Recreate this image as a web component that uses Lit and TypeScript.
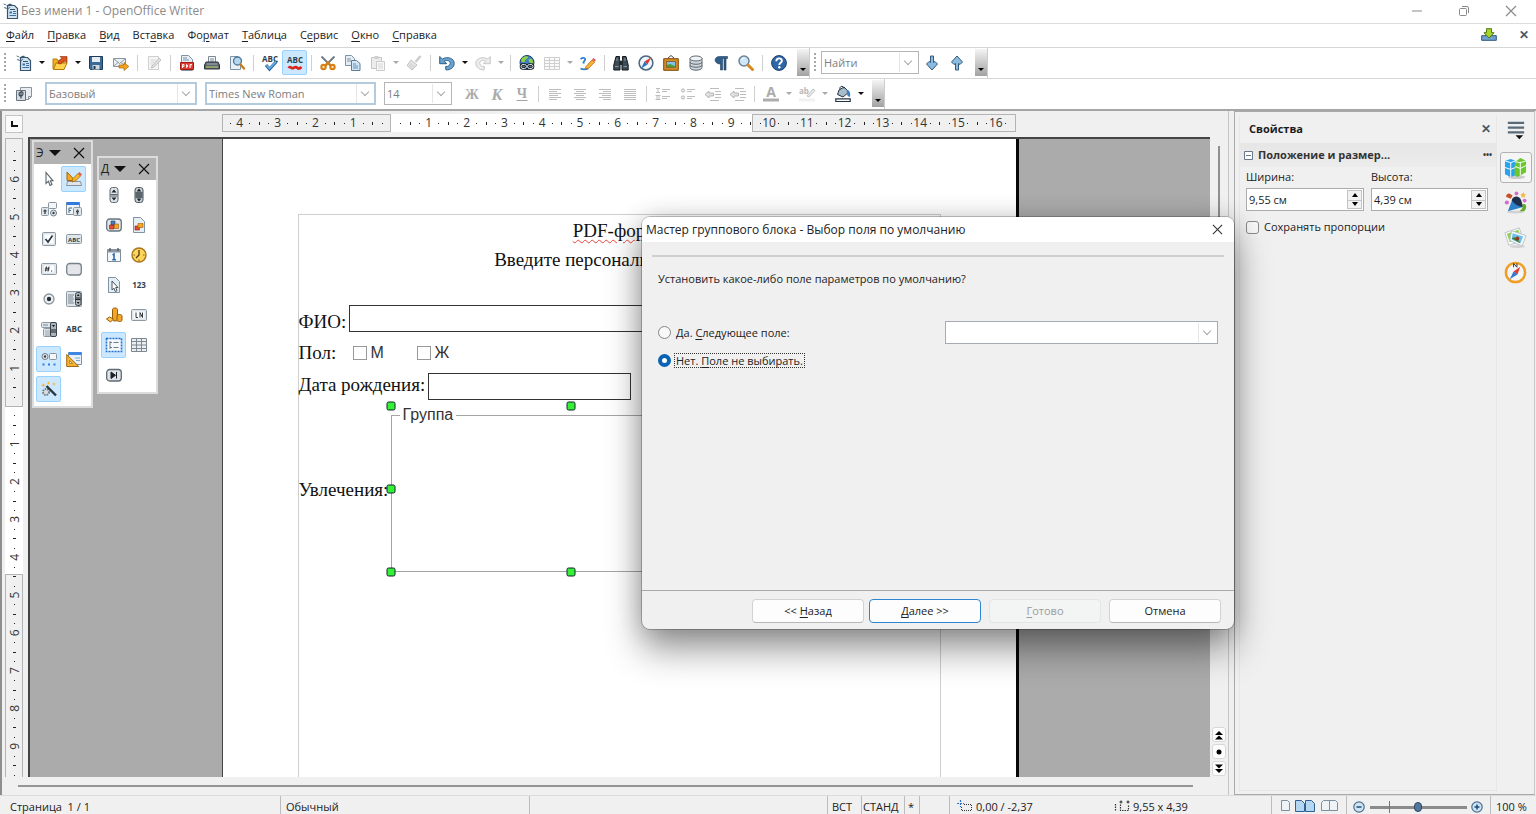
import { LitElement, html, svg, css, nothing } from "lit";
import { customElement, property, state } from "lit/decorators.js";
import { classMap } from "lit/directives/class-map.js";

/* ---------- icon artwork, each on a 16 x 16 grid ---------- */
const page = svg`<path d="M2.5.5h7l4 4v11h-11z" fill="#e4eef5" stroke="#7f93a3"/>`;
const frame = (x: number, y: number, w: number, h: number) =>
  svg`<rect x=${x} y=${y} width=${w} height=${h} rx="1" fill="#dfe5e9" stroke="#8c99a4"/>`;
const art: Record<string, unknown> = {
  app: svg`<path d="M4.500 2.500h7l3 3v10h-10z" fill="#d3e4f1" stroke="#39536a" stroke-width="1.200"/><path d="M7 6.500h5" stroke="#39536a"/><path d="M6.500 8.500h2.500v2H6.500z" fill="#3b6ea5"/><path d="M10 8.500h3M10 10.500h3M6.500 12.500h6.500" stroke="#3b6ea5"/><path d="M0 .800c2 0 3 .6 4 1.600C5.500.800 8 .200 10 1.300 8 1.500 7 2.300 6 3.600 4.500 2.300 2 2.300 0 .800z" fill="#37566e"/><path d="M.500 4.500c1.500-.6 3 .2 3.700 1.200C5 4.500 6.500 3.800 8 4.300 6.500 4.800 6 5.500 5.200 6.700 4 5.500 2 5.800.500 4.500z" fill="#56748c"/>`,
  open: svg`<path d="M1 14V4h4l1 2h6v8z" fill="#f2b21b" stroke="#b57a05"/><path d="M1.500 14.500 4 8h11l-3 6.500z" fill="#ffd34d" stroke="#b57a05"/><path d="M6 8.500c0-3 1.500-4 4-5L8 1.500h7V8l-2-2C10.500 6.500 9.500 7.500 9 9z" fill="#d9541e" stroke="#8e2f0b" stroke-width=".6"/>`,
  save: svg`<path d="M1.500 1.500h13v13h-12l-1-1z" fill="#3c6a94" stroke="#1d3b57"/><path d="M4 2h8v5H4z" fill="#e6eff6"/><path d="M4.500 10h7v4.500h-7z" fill="#cfd8df"/><path d="M5.500 11h2v3h-2z" fill="#1d3b57"/>`,
  mail: svg`<path d="M.500 3.500h12v8H.500z" fill="#edf1f4" stroke="#8a98a4"/><path d="m1 4 5.500 4.500L12 4M1 11l4-3.500M12 11 8 7.500" fill="none" stroke="#8a98a4"/><path d="M6 10h5V7.500l4.800 4L11 15.500V13H6z" fill="#f6a21c" stroke="#a86408" stroke-width=".7"/>`,
  edit: svg`<path d="M2.500 1.500h10v13h-10z" fill="#f6f6f6" stroke="#cfcfcf"/><path d="M4.500 5h5M4.500 7h4M4.500 9h2" stroke="#d4d4d4"/><path d="m6 11 7-8 2 2-7 7-3 1z" fill="#e0e0e0" stroke="#c2c2c2"/>`,
  pdf: svg`${page}<path d="M4 3h4M4 5h6" stroke="#7f93a3"/><path d="M1.500 7.500h13v7h-13z" fill="#e03a32" stroke="#a81812"/><path d="M3.500 13V9.500H5v2H3.500M7.500 9.500v3c1.500 0 1.500-3 0-3M11 13V9.500h2M11 11h1.500" stroke="#fff" fill="none" stroke-width=".9"/>`,
  print: svg`<path d="M4.500 1.500h7v6h-7z" fill="#f3f6f8" stroke="#7b8893"/><path d="M6 4h4M6 6h4" stroke="#7b8893"/><path d="M2 7h12l1.500 3v4H.500v-4z" fill="#59636d" stroke="#2d353c"/><path d="M2 12h12" stroke="#c8e06b"/><path d="M2.500 9h11" stroke="#aeb7bf"/>`,
  preview: svg`<path d="M1.500 1.500h7l3 3v10h-10z" fill="#e8f0f6" stroke="#7f93a3"/><circle cx="8.500" cy="6" r="4" fill="#a9d2f0" fill-opacity=".85" stroke="#4c7597" stroke-width="1.300"/><path d="m11.500 9.500 3.500 4" stroke="#c77b1f" stroke-width="2.400" stroke-linecap="round"/>`,
  spell: svg`<text x="8" y="6.500" class="tiny" text-anchor="middle">ABC</text><path d="m4 10 3.500 4 7-7.500" fill="none" stroke="#2f6da8" stroke-width="3.200"/><path d="m4.500 10.200 3 3.200 6.500-6.700" fill="none" stroke="#6fb4ea" stroke-width="1.400"/>`,
  autospell: svg`<text x="8" y="8" class="tiny" text-anchor="middle">ABC</text><path d="M1.500 13c2-3 3 1.500 5 0s3-1 4 0 2.500.500 4-1" fill="none" stroke="#d8261c" stroke-width="2.600"/>`,
  cut: svg`<path d="m1.500 1.500 9 9M14.500 1.500l-9 9" stroke="#707a83" stroke-width="1.800"/><circle cx="3.500" cy="12" r="2.200" fill="#fbe0b0" stroke="#d57e12" stroke-width="2"/><circle cx="12.500" cy="12" r="2.200" fill="#fbe0b0" stroke="#d57e12" stroke-width="2"/><path d="m5.500 10.500 2.500-3 2.500 3" stroke="#d57e12" stroke-width="2.200" fill="none"/>`,
  copy: svg`<path d="M.500.500h6l3 3v7h-9z" fill="#e4eef5" stroke="#7f93a3"/><path d="M2 4h4M2 6h4" stroke="#7f93a3"/><path d="M6.500 5.500h5l3.500 3v7H6.500z" fill="#d3e7f6" stroke="#5f7c93"/><path d="M8 9h3M8 11h5M8 13h5" stroke="#5f8fb5"/>`,
  paste: svg`<path d="M1.500 2.500h10v11h-10z" fill="#ececec" stroke="#c6c6c6"/><path d="M4.500 1h4v3h-4z" fill="#d0d0d0"/><path d="M6.500 6.500h8v9h-8z" fill="#f7f7f7" stroke="#cbcbcb"/><path d="M8 9h5M8 11h5M8 13h5" stroke="#d6d6d6"/>`,
  brush: svg`<path d="m14.500 1-5 6" stroke="#cdcdcd" stroke-width="2.600"/><path d="m5 5 6 5-5 5-5-4.500z" fill="#e4e4e4" stroke="#c4c4c4"/><path d="m4 8.500 5 4M3 10l4.500 4" stroke="#cfcfcf"/>`,
  undo: svg`<path d="M.700 1.500v7.200h7L5.200 6.200c3-1.400 6.200-.600 6 2.300-.200 2-2 3-4.700 3.200l.500 3.300c4.600-.200 8-2.300 8.200-6.500C15.400 3.300 8.500 1 3.300 4z" fill="#6ba3d0" stroke="#2f5f88"/>`,
  redo: svg`<path d="M15.300 1.500v7.200h-7l2.500-2.500c-3-1.400-6.200-.600-6 2.300.200 2 2 3 4.700 3.200L9 15C4.400 14.800 1 12.700.800 8.500.600 3.300 7.500 1 12.700 4z" fill="#ececec" stroke="#c8c8c8"/>`,
  globe: svg`<circle cx="8" cy="7.500" r="7" fill="#3f7fc0" stroke="#1f3f66"/><path d="M3 3c2-2 6-2 6-1 0 2-3 2-3 4S2 7 2 6zM10 4c3-1 4 1 4 3s-2 3-3 1-2-3-1-4z" fill="#8fcf4a"/><rect x="2" y="9.500" width="5.500" height="4" rx="2" fill="none" stroke="#1a1a1a" stroke-width="2.600"/><rect x="8.500" y="9.500" width="5.500" height="4" rx="2" fill="none" stroke="#1a1a1a" stroke-width="2.600"/><rect x="2" y="9.500" width="5.500" height="4" rx="2" fill="none" stroke="#dfe6ea"/><rect x="8.500" y="9.500" width="5.500" height="4" rx="2" fill="none" stroke="#dfe6ea"/>`,
  tableoff: svg`<path d="M.500 2.500h15v12H.500zM.500 5.500h15M.500 8.500h15M.500 11.500h15M5.500 2.500v12M10.500 2.500v12" fill="#fafafa" stroke="#cfcfcf"/>`,
  draw: svg`<path d="M.500 4c3-2 5.500-1 4.500 1s-3 3-.500 3M.500 13.500c2 1 5 1 8 0" fill="none" stroke="#2f7fcf" stroke-width="1.700"/><path d="m6 11.500 6-6.500 2.500 2.300-6 6-3.500.700z" fill="#f9b233" stroke="#b46a0c" stroke-width=".8"/><path d="m12 4.500 1.500-1.500 2.500 2.300-1.500 1.500z" fill="#e5564a"/>`,
  find: svg`<path d="M3 1.500h3.500v3L7 6v9H.800v-5zM13 1.500H9.500v3L9 6v9h6.200v-5z" fill="#3d4b57" stroke="#151b20"/><path d="M6 6h4v4H6z" fill="#222b32"/><path d="M2 11.500h3.500M10.500 11.500H14M4 3v3M12 3v3" stroke="#8797a4"/>`,
  compass: svg`<circle cx="8" cy="8" r="6.900" fill="#edf4fa" stroke="#4a6881" stroke-width="1.500"/><path d="M13 2.500 9.500 9.500 6.500 6.500z" fill="#e2352b"/><path d="M3 13.500 9.500 9.500l-3-3z" fill="#2f72b8"/>`,
  gallery: svg`<path d="m5 3 3-2.500L11 3" fill="none" stroke="#5b4632"/><path d="M.700 3.700h14.600v11.600H.700z" fill="#d58a26" stroke="#7d4a0d"/><path d="M3.500 6.500h9v6h-9z" fill="#7ec3ef" stroke="#7d4a0d" stroke-width=".7"/><path d="M4 12v-2l3-1 5 2v1.500z" fill="#4f9a35"/>`,
  db: svg`<path d="M2 3.500v9c0 3.600 12 3.600 12 0v-9" fill="#ced5da" stroke="#5f6a73"/><path d="M2 7c0 3 12 3 12 0M2 10c0 3 12 3 12 0" fill="none" stroke="#5f6a73"/><ellipse cx="8" cy="3.500" rx="6" ry="2.500" fill="#f1f4f6" stroke="#5f6a73"/>`,
  pilcrow: svg`<path d="M14.500 1.500v2h-1.500v11.500h-2V3.500H9.500V15h-2V9C.500 9 .500 1.500 6.500 1.500z" fill="#2f5d8c" stroke="#1c3a59" stroke-width=".6"/>`,
  zoom: svg`<circle cx="6" cy="6" r="5" fill="#cfe7f8" stroke="#66839b" stroke-width="1.500"/><path d="M3.500 5c.500-1.500 2-2 3-1.800" stroke="#fff" fill="none"/><path d="m10 10 4.500 4.500" stroke="#d58a26" stroke-width="3" stroke-linecap="round"/>`,
  help: svg`<circle cx="8" cy="8" r="7.400" fill="#2f66a8" stroke="#1b3f70"/><path d="M5.300 6.200c0-3.700 5.600-3.700 5.600-.500 0 2-2.600 2-2.600 4.200" fill="none" stroke="#fff" stroke-width="1.900"/><circle cx="8.300" cy="12.300" r="1.200" fill="#fff"/>`,
  down: svg`<path d="M6.500 1h3v6.500L11 6.500 13.500 9 8 15 2.500 9 5 6.500l1.500 1z" fill="#8abbe0" stroke="#34597a"/>`,
  up: svg`<path d="M6.500 15h3V8.500L11 9.500 13.500 7 8 1 2.500 7 5 9.500l1.500-1z" fill="#8abbe0" stroke="#34597a"/>`,
  styles: svg`<path d="M4.500 1.500h11v9l-3 3h-8z" fill="#e8edf1" stroke="#8a949d"/><path d="M12.500 13.500v-3h3" fill="none" stroke="#8a949d"/><path d="M.500 4.500h9v10h-9z" fill="#d7dde2" stroke="#66727c"/><path d="M5 6.500v6M3 7.500c0 3.500 4 3.500 4 0s-4-1-4 0" stroke="#3f4a54" fill="none" stroke-width="1.200"/>`,
  bold: svg`<text x="8" y="13" class="glyph" text-anchor="middle">Ж</text>`,
  italic: svg`<text x="8" y="13.500" class="glyph ital" text-anchor="middle">К</text>`,
  under: svg`<text x="8" y="12" class="glyph" text-anchor="middle">Ч</text><path d="M2.500 14.500h11" stroke="#a4a4a4"/>`,
  left: svg`<path d="M2 3.500h12M2 5.500h8M2 7.500h12M2 9.500h9M2 11.500h12M2 13.500h8" stroke="#bdbdbd"/>`,
  center: svg`<path d="M2 3.500h12M4 5.500h8M2 7.500h12M4 9.500h8M2 11.500h12M4 13.500h8" stroke="#bdbdbd"/>`,
  right: svg`<path d="M2 3.500h12M6 5.500h8M2 7.500h12M5 9.500h9M2 11.500h12M6 13.500h8" stroke="#bdbdbd"/>`,
  justify: svg`<path d="M2 3.500h12M2 5.500h12M2 7.500h12M2 9.500h12M2 11.500h12M2 13.500h12" stroke="#bdbdbd"/>`,
  numbered: svg`<path d="M1 2.500h4M1 6.500h4M3 2.500v4M.500 9.500h5M.500 13.500h5M2 9.500v4M4 9.500v4M7 3.500h8M7 5.500h5M7 10.500h8M7 12.500h5" stroke="#bdbdbd"/>`,
  bullets: svg`<circle cx="3" cy="4.500" r="1.600" fill="#eee" stroke="#b5b5b5"/><circle cx="3" cy="11.500" r="1.600" fill="#eee" stroke="#b5b5b5"/><path d="M7 3.500h8M7 5.500h5M7 10.500h8M7 12.500h5" stroke="#bdbdbd"/>`,
  outdent: svg`<path d="M5 2.500h9M10 5.500h6M10 8.500h6M10 11.500h6M5 14.500h9" stroke="#bdbdbd"/><path d="M0 8.500 4 5v2h4.500v3H4v2z" fill="#e2e2e2" stroke="#b5b5b5"/>`,
  fontcolor: svg`<text x="8" y="11" class="glyph sans" text-anchor="middle">A</text><path d="M0 14h16" stroke="#adadad" stroke-width="3"/>`,
  marker: svg`<text x="0" y="8" class="tiny pale">ab</text><path d="m8 10 6-7 2 1.500L10 11z" fill="#e8e8e8" stroke="#c4c4c4"/><path d="M0 14h16" stroke="#f1f1f1" stroke-width="3"/>`,
  fill: svg`<path d="m4 4 5-3 5 5-6 5L2.500 8.500z" fill="#a9bccb" stroke="#253545"/><path d="M5 3.500c-1-4 4-4 4-1" fill="none" stroke="#253545"/><path d="M11.500 3.500c3.500 1 4 3.500 3.500 7.500l-2.500-1z" fill="#3c7fc0"/><path d="M.800 12.800h14.400v2.700H.800z" fill="#fff" stroke="#253545" stroke-width="1.200"/>`,
  pointer: svg`<path d="M5 1.500v11l2.500-2.300L9 14.500l2-1-1.600-3.700H12z" fill="#fff" stroke="#5a646c" stroke-width="1.100"/>`,
  design: svg`<path d="M1 9.500V1l8 8.500z" fill="#f5a91f" stroke="#a86608"/><path d="M1.500 10.500h13l1 4H.500z" fill="#dfe5ea" stroke="#8794a0"/><path d="m6 11 1-3.500 5-5L14.500 5l-5 5z" fill="#fbb42e" stroke="#9e6a12" stroke-width=".8"/><path d="m12 2.500 1.500-1.500L16 3.500 14.500 5z" fill="#e4584c"/>`,
  control: svg`<rect x="7.500" y="1.500" width="8" height="6" rx="1" fill="#f4f6f8" stroke="#87939d"/>${frame(0.5, 6.5, 7, 8)}<path d="M4 8.500v4.500M2.500 10h3" stroke="#3e4a54" stroke-width="1.400"/><circle cx="12.500" cy="12" r="3" fill="#e3e9ed" stroke="#6f7c87"/><circle cx="12.500" cy="12" r="1.200" fill="#30404f"/>`,
  form: svg`<path d="M.500 1.500h13v12H.500z" fill="#eef3f7" stroke="#8794a0"/><path d="M.500 1h13v3H.500z" fill="#2f7be0"/><path d="M3 7h3M3 7v5M3 9.500h2" stroke="#4b6a85"/>${frame(7.5, 6.5, 8, 8)}<path d="M11.500 8.500v5M10 10.500h3" stroke="#3e4a54" stroke-width="1.400"/>`,
  check: svg`${frame(1.5, 1.5, 13, 13)}<path d="M3.500 3.500h9v9h-9z" fill="#fff"/><path d="m4.500 8 2.500 3 4.500-6.500" fill="none" stroke="#2c3640" stroke-width="1.700"/>`,
  textbox: svg`${frame(0.5, 3.5, 15, 9)}<text x="8" y="10.500" class="micro" text-anchor="middle">ABC</text>`,
  formatted: svg`${frame(0.5, 2.5, 15, 11)}<path d="M3 4.500h10v7H3z" fill="#fff"/><path d="M5.500 5.500l-1 5M8 5.500l-1 5M4 7.200h4.500M3.700 9h4.500M10 10h1.200" stroke="#2c3640"/>`,
  pushbutton: svg`<rect x=".700" y="2.500" width="14.600" height="11.500" rx="3" fill="#e3e5ea" stroke="#75828c" stroke-width="1.300"/>`,
  radio: svg`<circle cx="8" cy="8" r="5" fill="#eef1f4" stroke="#8a959e" stroke-width="1.300"/><circle cx="8" cy="8" r="2.200" fill="#26323c"/>`,
  listbox: svg`${frame(0.5, 0.5, 15, 15)}<path d="M2 4h6M2 6h5M2 8h6M2 10h5M2 12h6" stroke="#7b8791"/><rect x="9.500" y="1.500" width="5.500" height="13" rx="2" fill="#aab4bd" stroke="#3a444d"/><path d="m12.200 3 1.300 2h-2.600zM12.200 13l-1.300-2h2.600z" fill="#111"/><path d="M10 7h4.500M10 8.500h4.500" stroke="#222"/>`,
  combo: svg`${frame(0.5, 1.5, 15, 5)}<path d="M2 4h5" stroke="#7b8791"/>${frame(2.5, 7.5, 8, 8)}<path d="M4 10h5M4 12h5M4 14h5" stroke="#9aa5ae"/><rect x="9.500" y="1.500" width="6" height="14" rx="1.500" fill="#aab4bd" stroke="#3a444d"/><path d="m12.500 6-1.500-2h3z" fill="#111"/><path d="M10 9h5M10 11h5" stroke="#222"/>`,
  label: svg`<text x="8" y="11" class="tiny" text-anchor="middle">ABC</text>`,
  more: svg`<circle cx="4" cy="5.500" r="3" fill="#e3e9ed" stroke="#6f7c87"/><circle cx="4" cy="5.500" r="1.200" fill="#30404f"/><rect x="8.500" y="2.500" width="7" height="6" rx="1" fill="#f4f6f8" stroke="#87939d"/><path d="M1.500 13.500h2M7 13.500h2M12.500 13.500h2" stroke="#2f7be0" stroke-width="2"/>`,
  formdesign: svg`<path d="M2.500 1.500h13v12h-13z" fill="#e9f1f8" stroke="#8794a0"/><path d="M2.500 1h13v3h-13z" fill="#3d86e4"/><path d="M9 7h5M10 9.500h4" stroke="#7fa7cd"/><path d="M.700 3.500v12h12z" fill="#f9b233" stroke="#9e6a12"/><path d="M3.500 9.500v3h3z" fill="#fff3d0" stroke="#9e6a12" stroke-width=".7"/>`,
  wizard: svg`<circle cx="5" cy="11" r="3" fill="#dce0e3" stroke="#6f7a83" stroke-width="2" stroke-dasharray="1.500 1"/><path d="m5.500 5 9.500 9.500" stroke="#2d353c" stroke-width="2.400"/><path d="m2 2 1 1.500L4.500 4 3 4.800 2.500 6.500 1.700 5 0 4.500l1.500-.800zM7.500 0l.6 1.500L9.500 2l-1.400.6L7.500 4 7 2.600 5.500 2 7 1.500zM13 1l.6 1.500 1.400.500-1.400.6L13 5l-.6-1.400L11 3l1.400-.5z" fill="#f7b52b"/>`,
  spin: svg`<rect x="4" y=".500" width="8" height="15" rx="2.500" fill="#dfe4e8" stroke="#5b6670"/><path d="m8 2.500 2.500 3h-5zM8 13.500l-2.500-3h5z" fill="#1b2127"/><path d="M4.500 7.500h7M4.500 9h7" stroke="#5b6670"/>`,
  scroll: svg`<rect x="4" y=".500" width="8" height="15" rx="2.500" fill="#c6cdd3" stroke="#4b555e"/><path d="m8 1.500 2.300 3H5.700zM8 14.500l-2.300-3h4.600z" fill="#1b2127"/><path d="M4.500 6h7M4.500 8h7M4.500 10h7" stroke="#39434c" stroke-width="1.400"/>`,
  imgbutton: svg`<rect x=".700" y="2" width="14.600" height="12" rx="3" fill="#e3e8ec" stroke="#68757f" stroke-width="1.300"/><path d="M5 4h4v4H5z" fill="#4a78b8" stroke="#26466f" stroke-width=".6"/><path d="M3.500 8h4.500v4H3.500z" fill="#e34b33" stroke="#8e1f10" stroke-width=".6"/><path d="M8.500 7h4v4.500h-4z" fill="#f9a825" stroke="#9b5b08" stroke-width=".6"/>`,
  imgcontrol: svg`${page}<path d="M4 9h4.500v4H4z" fill="#e34b33" stroke="#8e1f10" stroke-width=".6"/><path d="M7 6.500h5v4H7z" fill="#f9a825" stroke="#9b5b08" stroke-width=".6"/>`,
  date: svg`<path d="M1.500 2.500h13v12h-13z" fill="#f5f8fa" stroke="#808c96"/><path d="M1.500 2.500h13v3h-13z" fill="#8b98a3"/><path d="M4 1v3M12 1v3" stroke="#4c565f" stroke-width="1.300"/><path d="M6.500 8 8 7v5.500M6.300 12.800h3.600" stroke="#2461a8" stroke-width="1.500" fill="none"/>`,
  time: svg`<circle cx="8" cy="8" r="7" fill="#ffd45c" stroke="#a8741b" stroke-width="1.400"/><path d="M8 3v5l-3 3" fill="none" stroke="#4d3a14" stroke-width="1.300"/><path d="M12 8h1.500M8 12.500V14M2.500 8H4" stroke="#7d5a14"/>`,
  file: svg`${page}<path d="M6 4v9l2-1.800 1.300 3.300 1.700-.8L9.700 10.500H12z" fill="#fff" stroke="#4b555e"/>`,
  numeric: svg`<text x="8" y="11" class="tiny" text-anchor="middle">123</text>`,
  currency: svg`<path d="M6.500 2.500c0-2 5-2 5 0v10c0 2-5 2-5 0z" fill="#f3a72a" stroke="#95590a"/><path d="M11 9c0-2 5-2 5 0v4c0 2-5 2-5 0z" fill="#f3a72a" stroke="#95590a"/><path d="m.500 12 3-2 4 2-3 3z" fill="#ffc85e" stroke="#95590a"/>`,
  pattern: svg`${frame(0.5, 2.5, 15, 11)}<path d="M2.500 4.500h11v7h-11z" fill="#fff"/><path d="M5 5.500v5h2M9 10.500v-5l2.500 5v-5" fill="none" stroke="#2c3640"/>`,
  group: svg`<path d="M.500 1.500h15v13H.500z" fill="#f6f9fb" stroke="#1e6fd0" stroke-width="1.600" stroke-dasharray="2 1"/><path d="M4 4v8M4 5.500h2M4 10.500h2M7.500 5.500h5M7.500 10.500h5" stroke="#6c7a86"/>`,
  tablectl: svg`<path d="M.500 1.500h15v13H.500z" fill="#eceff1" stroke="#7d8892"/><path d="M.500 4.500h15M.500 8h15M.500 11.500h15M5.500 1.500v13M10.500 1.500v13" stroke="#7d8892"/>`,
  navbar: svg`<rect x=".700" y="2.500" width="14.600" height="11.500" rx="3" fill="#dfe3e7" stroke="#5f6b75" stroke-width="1.300"/><path d="M5 5v6.500l4.500-3.200zM10.500 5v6.500" fill="#1b2127" stroke="#1b2127"/>`,
  update: svg`<path d="M.700 8.700h14.600v4.600H.700z" fill="#6ea3cf" stroke="#2e577b"/><path d="M5.500 1.700h5v4h2.500L8 11 3 5.700h2.500z" fill="#a8d62c" stroke="#4f7a0c"/>`,
  minus: svg`<circle cx="8" cy="8" r="5.200" fill="#cfe3f3" stroke="#4a6f90" stroke-width="1.200"/><path d="M5.500 8h5" stroke="#1f4b75" stroke-width="1.500"/>`,
  plus: svg`<circle cx="8" cy="8" r="5.200" fill="#cfe3f3" stroke="#4a6f90" stroke-width="1.200"/><path d="M5.500 8h5M8 5.500v5" stroke="#1f4b75" stroke-width="1.500"/>`,
  pos: svg`<path d="M0 4.500h7M3.500 1v7" stroke="#2f6fd0" stroke-width="1.200" stroke-dasharray="2 1"/><path d="M7 5.500h7.500v6H4.500V8" fill="none" stroke="#333" stroke-dasharray="1 1"/>`,
  size: svg`<path d="M1.500 5v7M6.500 5.500v6h8v-6" fill="none" stroke="#333" stroke-width="1.200" stroke-dasharray="1.500 1"/><path d="M5.500 3h3M7 1.500v3M15.500 3h-3M14 1.500v3" stroke="#222"/>`,
};

@customElement("oo-icon")
export class OoIcon extends LitElement {
  static styles = css`
    :host { display: inline-flex; width: 16px; height: 16px; flex: none; }
    svg { width: 16px; height: 16px; display: block; overflow: visible; }
    .tiny { font: 700 8px "Open Sans", sans-serif; fill: #2e3f4e; }
    .pale { fill: #b8b8b8; }
    .micro { font: 700 6px "Open Sans", sans-serif; fill: #2e3f4e; }
    .glyph { font: 700 14px "Liberation Serif", serif; fill: #ababab; }
    .sans { font-family: "Open Sans", sans-serif; }
    .ital { font-style: italic; font-size: 16px; }
  `;
  @property() name = "app";
  render() {
    return html`<svg viewBox="0 0 16 16" fill="none" aria-hidden="true">${art[this.name] ?? nothing}</svg>`;
  }
}

/* ---------- rulers ---------- */
const CM = 37.8;
type Band = { from: number; to: number; shaded: boolean };

@customElement("oo-ruler")
export class OoRuler extends LitElement {
  static styles = css`
    :host { display: block; }
    svg { display: block; }
    .band { fill: #fff; }
    .shaded { fill: #f0f0f0; stroke: #b4b4b4; }
    .num { font: 12px "Open Sans", sans-serif; fill: #333; text-anchor: middle; }
    .tick { stroke: #222; stroke-width: 1; }
  `;
  @property({ type: Boolean }) vertical = false;
  @property({ attribute: false }) bands: Band[] = [];
  @property({ type: Number }) zero = 0;
  @property({ type: Number }) length = 0;

  render() {
    const v = this.vertical;
    const marks = [];
    const first = Math.ceil((-this.zero / CM) * 4);
    const last = Math.floor(((this.length - this.zero) / CM) * 4);
    for (let q = first; q <= last; q++) {
      const at = this.zero + (q * CM) / 4;
      if (at < 5 || at > this.length - 3 || q === 0) continue;
      if (q % 4 === 0) {
        const label = String(Math.abs(q / 4));
        marks.push(v
          ? svg`<text class="num" transform="translate(14 ${at}) rotate(-90)">${label}</text>`
          : svg`<text class="num" x=${at} y="13">${label}</text>`);
      } else {
        const r = q % 2 === 0 ? 1.5 : 0.5;
        marks.push(v
          ? svg`<path class="tick" d="M${9.5 - r} ${Math.round(at) + 0.5}h${2 * r}"/>`
          : svg`<path class="tick" d="M${Math.round(at) + 0.5} ${9.5 - r}v${2 * r}"/>`);
      }
    }
    const w = v ? 18 : this.length;
    const h = v ? this.length : 18;
    return html`<svg width=${w} height=${h}>
      ${this.bands.map((b) => {
        const cls = b.shaded ? "band shaded" : "band";
        const size = b.to - b.from - (b.shaded ? 1 : 0);
        const o = b.shaded ? 0.5 : 0;
        const t = b.shaded ? 17 : 18;
        return v
          ? svg`<rect class=${cls} x=${o} y=${b.from + o} width=${t} height=${size}/>`
          : svg`<rect class=${cls} x=${b.from + o} y=${o} width=${size} height=${t}/>`;
      })}
      ${marks}
    </svg>`;
  }
}

/* ---------- data ---------- */
type Tool = string; // "|" separator, "V" drop arrow, "v" greyed drop arrow, "*" pressed
const standard: Tool[] = ["app", "V", "open", "V", "save", "mail", "|", "edit", "|", "pdf", "print", "preview", "|",
  "spell", "*autospell", "|", "cut", "copy", "paste", "v", "brush", "|", "undo", "V", "redo", "v", "|", "globe",
  "tableoff", "v", "draw", "|", "find", "compass", "gallery", "db", "pilcrow", "zoom", "|", "help"];
const formatting: Tool[] = ["bold", "italic", "under", "|", "left", "center", "right", "justify", "|", "numbered",
  "bullets", "outdent", "outdent", "|", "fontcolor", "v", "marker", "v", "fill", "V"];
const controls: Tool[] = ["pointer", "*design", "control", "form", "check", "textbox", "formatted", "pushbutton",
  "radio", "listbox", "combo", "label", "*more", "formdesign", "*wizard"];
const extras: Tool[] = ["spin", "scroll", "imgbutton", "imgcontrol", "date", "time", "file", "numeric", "currency",
  "pattern", "*group", "tablectl", "navbar"];
const menus: [string, string, string][] = [["", "Ф", "айл"], ["", "П", "равка"], ["", "В", "ид"], ["Вст", "а", "вка"],
  ["Фо", "р", "мат"], ["", "Т", "аблица"], ["С", "е", "рвис"], ["", "О", "кно"], ["", "С", "правка"]];

@customElement("app-root")
export class AppRoot extends LitElement {
  static styles = css`
    :host {
      display: flex; flex-direction: column; height: 100vh; overflow: hidden; position: relative;
      font: 11px/16px "Open Sans", "Noto Sans", sans-serif; color: #1c1c1c; background: #fff;
    }
    * { box-sizing: border-box; }
    button { font: inherit; color: inherit; border: 0; background: none; padding: 0; margin: 0; }
    input, select { font: inherit; color: inherit; margin: 0; border-radius: 0; }
    u { text-underline-offset: 2px; }

    .titlebar { display: flex; align-items: center; height: 24px; flex: none; padding: 0 2px 1px 3px; gap: 2px;
      border-bottom: 1px solid #dcdcdc; color: #8a8a8a; }
    .titlebar h1 { font: inherit; font-size: 12px; margin: 0; flex: 1; }
    .win { display: flex; }
    .win button { width: 47px; height: 22px; display: grid; place-items: center; }
    .win svg { width: 12px; height: 12px; }

    .menubar { display: flex; align-items: center; height: 24px; flex: none; padding: 0 6px 2px; gap: 13px;
      border-bottom: 1px solid #d6d6d6; }
    .menubar a { color: inherit; text-decoration: none; }
    .menubar .end { margin-left: auto; display: flex; gap: 21px; align-items: center; }
    .closex { font-weight: 700; font-size: 12px; color: #4a5866; width: 12px; display: grid; place-items: center; }

    .bars { display: flex; flex-direction: column; flex: none; border-bottom: 2px solid #a6a6a6; }
    .bar { display: flex; align-items: center; align-self: flex-start; height: 30px; padding: 0 0 1px 4px;
      border-right: 1px solid #cdcdcd; }
    .row { display: flex; border-bottom: 1px solid #d6d6d6; }
    .row.last { border-bottom: 0; height: 30px; }
    .grip { width: 2px; height: 20px; margin-right: 5px; flex: none;
      background: repeating-linear-gradient(#a8a8a8 0 2px, transparent 2px 4px); }
    .tool { width: 25px; height: 25px; display: grid; place-items: center; flex: none; }
    .tool.on { background: #cce8ff; border: 1px solid #99d1ff; border-radius: 2px; }
    .sep { width: 8px; height: 16px; flex: none; background: linear-gradient(#cfcfcf, #cfcfcf) 4px 0 / 1px 100% no-repeat; }
    .drop { width: 11px; height: 25px; display: grid; place-items: center; flex: none; }
    .drop::after { content: ""; border: 3px solid transparent; border-top: 3px solid #111; border-bottom: 0; }
    .drop.off::after { border-top-color: #aaa; }
    .over { width: 12px; height: 27px; margin-left: 6px; flex: none; display: grid; place-items: end center;
      padding-bottom: 5px; background: linear-gradient(#f4f4f4, #a2a2a2); }
    .over::after { content: ""; border: 3px solid transparent; border-top: 3px solid #000; border-bottom: 0; }

    .combo { display: block; position: relative; height: 23px; }
    .combo select, .combo input { appearance: none; width: 100%; height: 100%; border: 1px solid #b5b5b5; background: #fff;
      padding: 0 2px; color: #7d7d7d; outline: 0; opacity: 1; }
    .combo input::placeholder { color: #7d7d7d; }
    .combo.blue select { border: 2px solid #b4cbde; }
    .combo::after { content: ""; position: absolute; right: 8px; top: 7px; width: 5px; height: 5px;
      border: solid #a8a8a8; border-width: 0 1px 1px 0; transform: rotate(45deg); pointer-events: none; }
    .combo::before { content: ""; position: absolute; right: 2px; top: 2px; bottom: 2px; width: 17px;
      border-left: 1px solid #e6e6e6; pointer-events: none; }
    .w-style { width: 152px; margin: 0 8px 0 9px; }
    .w-font { width: 171px; margin-right: 8px; }
    .w-size { width: 68px; margin-right: 7px; }
    .w-find { width: 98px; }

    .main { display: flex; flex: 1; min-height: 0; background: #f0f0f0; border-left: 2px solid #8e8e8e; }
    .editor { flex: 1; min-width: 0; display: grid; grid-template-columns: 26px 1fr 18px; grid-template-rows: 26px 1fr 18px;
      border-right: 1px solid #c6c6c6; }
    .corner { margin: 4px 0 0 3px; width: 18px; height: 18px; border: 1px solid #c4c4c4; background: #fafafa; display: grid; place-items: center; }
    .corner i { width: 7px; height: 6px; border: solid #111; border-width: 0 0 2px 2px; }
    .hruler { display: flex; justify-content: center; padding: 3px 0 0 1px; grid-column: 2; overflow: hidden; }
    .vruler { padding: 1px 0 0 3px; overflow: hidden; }
    .canvas { background: #ababab; border: solid #444; border-width: 2px 0 0 2px; position: relative; overflow: hidden;
      display: flex; justify-content: center; }
    .vscroll { display: flex; flex-direction: column; align-items: center; gap: 2px; padding: 9px 0 1px; grid-column: 3; }
    .vscroll .thumb { width: 2px; height: 200px; background: #8f8f8f; margin-bottom: auto; }
    .vscroll button { width: 14px; height: 15px; border: 1px solid #d8d8d8; border-radius: 3px; background: #fdfdfd;
      display: grid; place-items: center; }
    .vscroll svg { width: 10px; height: 10px; display: block; }
    .hscroll { grid-column: 1 / -1; padding: 8px 35px 0 16px; }
    .hscroll div { height: 2px; background: #959595; }

    .sheet { width: 797px; background: #fff; border: solid #444; border-width: 0 3px 0 1px; border-right-color: #080808;
      padding: 75px 75px 0; flex: none; font: 19px/29px "Liberation Serif", serif; color: #111; display: flex; }
    .body { flex: 1; border: 1px solid #cfcfcf; border-bottom: 0; padding-top: 1px; }
    .body p { margin: 0; text-align: center; }
    .wavy { text-decoration: underline wavy #e8443c 1px; text-underline-offset: 2px; }
    .line { display: flex; align-items: center; height: 31px; }
    .field { border: 1px solid #333; background: #fff; height: 27px; padding: 0 4px; }
    .fio { margin: 32px 0 0; }
    .fio .field { flex: 1; margin: -6px 1px 0 3px; }
    .born .field { width: 203px; margin: 5px 0 0 3px; }
    .born { height: 32px; }
    .sex { width: 54px; }
    .opt { display: flex; align-items: center; gap: 4px; font: 16px/20px "Liberation Sans", sans-serif; color: #333; width: 64px; }
    .opt input { appearance: none; width: 14px; height: 14px; border: 1px solid #999; background: #fff; }
    .hobby { display: flex; align-items: center; margin-top: 6px; }
    .hobby > span { width: 92px; }
    .grp { position: relative; width: 361px; height: 166px; }
    .grp fieldset { position: relative; border: 1px solid #a4a4a4; margin: 0; padding: 0 0 0 8px; height: 100%; min-width: 0; }
    .grp legend { font: 16px/18px "Liberation Sans", sans-serif; color: #333; padding: 0 3px; }
    .knob { position: absolute; width: 9px; height: 9px; border: 1px solid #123; border-radius: 2px; background: #35f035;
      transform: translate(-50%, -50%); }

    .palette { position: absolute; width: 61px; background: #fff; border: 2px solid #dcdcdc; z-index: 1; }
    .p1 { left: 2px; top: 1px; height: 268px; }
    .p2 { left: 67px; top: 17px; height: 238px; }
    .palette header { display: flex; align-items: center; height: 22px; background: #b2b2b2; padding: 0 6px 0 2px;
      font-size: 12px; color: #222; }
    .palette header svg { width: 12px; height: 12px; margin-left: auto; }
    .palette header button { display: flex; flex: 1; }
    .palette header .tri { width: 12px; flex: none; margin-left: 5px; }
    .palette header .tri svg { margin: 0; }
    .grid { display: grid; grid-template-columns: 25px 25px; grid-auto-rows: 26px; row-gap: 4px; padding: 2px 0 0 2px; }
    .grid .tool { height: 26px; }

    .sidebar { width: 301px; flex: none; display: flex; border: 1px solid #a9a9a9; border-right-color: #c8c8c8; margin: 0 1px 0 5px; }
    .deck { flex: 1; margin: 4px 0 3px 4px; border: 1px solid #e6e6e6; border-top: 0; }
    .deck h2 { font-size: 11px; line-height: 25px; margin: 0; padding: 0 4px 0 9px; display: flex; justify-content: space-between; }
    .deck h3 { font-size: 11px; line-height: 24px; margin: 2px 0 2px; padding: 0 4px 0 4px; display: flex; align-items: center; gap: 5px;
      background: linear-gradient(#e6e6e6, #ececec); color: #333; }
    .deck h3 span { flex: 1; }
    .deck h3 button { font-size: 8px; }
    .deck h3 svg { width: 9px; height: 9px; }
    .dims { display: grid; grid-template-columns: 118px 117px; gap: 7px; padding: 0 6px; }
    .dims label { display: block; }
    .spinbox { position: relative; display: block; height: 23px; margin-top: 3px; }
    .spinbox input { width: 100%; height: 100%; border: 1px solid #acacac; background: #fff; padding: 0 2px; outline: 0; }
    .spinbox .arrows { position: absolute; right: 2px; top: 2px; bottom: 2px; width: 15px; display: grid; grid-template-rows: 1fr 1fr;
      border: 1px solid #c4c4c4; background: #f2f2f2; }
    .arrows button { display: grid; place-items: center; }
    .arrows button + button { border-top: 1px solid #c4c4c4; }
    .arrows svg { width: 6px; height: 4px; display: block; }
    .keep { display: flex; align-items: center; gap: 5px; padding: 8px 6px; }
    .keep input { appearance: none; width: 13px; height: 13px; border: 1px solid #8a8a8a; border-radius: 3px; background: #f6f6f6; }
    .tabs { width: 37px; display: flex; flex-direction: column; align-items: center; padding-top: 6px; gap: 4px; }
    .tabs button { width: 32px; height: 31px; display: grid; place-items: center; }
    .tabs .cur { border: 1px solid #b2b2b2; border-radius: 3px; background: #f5f5f5; margin-top: 6px; }
    .tabs svg { width: 23px; height: 23px; display: block; }
    .tabs .burger { height: 24px; }

    .status { display: flex; height: 19px; flex: none; background: #f0f0f0; border-top: 1px solid #dcdcdc; color: #222; }
    .cell { border-right: 1px solid #bcbcbc; padding: 3px 0 0 5px; height: 19px; white-space: pre; display: flex; overflow: hidden; }
    .cell oo-icon { margin: 0 3px 0 0; }
    .c-page { width: 281px; padding-left: 10px; }
    .c-style { width: 249px; }
    .c-lang { flex: 1; }
    .c-ins { width: 34px; padding-left: 4px; }
    .c-std { width: 43px; padding-left: 1px; }
    .c-mod { width: 15px; padding-left: 3px; }
    .c-sig { width: 30px; }
    .c-pos { width: 322px; padding-left: 7px; }
    .c-pos span { width: 138px; }
    .c-view { width: 75px; padding-left: 6px; }
    .c-view svg { width: 62px; height: 14px; }
    .c-zoom { width: 144px; padding-left: 4px; align-items: flex-start; }
    .c-zoom input { appearance: none; width: 97px; height: 16px; margin: 0 2px 0 0;
      background: linear-gradient(#777, #777) 19px 50% / 1px 12px no-repeat, linear-gradient(#8b8b8b, #8b8b8b) 0 50% / 100% 3px no-repeat; }
    .c-zoom input::-webkit-slider-thumb { appearance: none; width: 8px; height: 10px; border-radius: 4px; background: #52779b; border: 1px solid #2d4a66; }
    .c-pct { width: 45px; border: 0; }

    .dialog { position: absolute; left: 642px; top: 217px; width: 592px; height: 412px;
      border-radius: 8px; background: #f0f0f0; z-index: 5; color: #222; display: flex; flex-direction: column;
      box-shadow: 0 0 0 1px rgba(0,0,0,.22), 0 20px 36px rgba(0,0,0,.42), 0 0 24px rgba(0,0,0,.16); }
    .dialog header { display: flex; align-items: center; justify-content: space-between; height: 25px; padding: 0 10px 0 4px;
      background: #fff; border-radius: 8px 8px 0 0; }
    .dialog header span { font-size: 12px; }
    .dialog header svg { width: 11px; height: 11px; display: block; }
    .dialog header button { padding: 1px; }
    .content { flex: 1; margin: 13px 10px 0; border-top: 2px solid #cfcfcf; padding: 14px 6px 0; }
    .content p { margin: 0 0 31px; }
    .choice { display: flex; align-items: center; height: 28px; }
    .choice label { padding: 0 1px; line-height: 13px; border: 1px solid transparent; margin-left: 3px; }
    .choice input:checked + label { border: 1px dotted #333; }
    .choice input { appearance: none; width: 13px; height: 13px; border: 1px solid #858585; border-radius: 50%; background: #f8f8f8; }
    .choice input:checked { border: 4px solid #0a63b4; background: #fff; }
    .choice .combo { width: 273px; margin-left: auto; }
    .choice .combo select { border: 1px solid #a6abb1; }
    .actions { display: flex; gap: 8px; justify-content: flex-end; border-top: 1px solid #a9a9a9; padding: 8px 13px 6px; }
    .actions div { display: flex; gap: 5px; }
    .actions button { width: 112px; height: 24px; border: 1px solid #d2d2d2; border-bottom-color: #b9b9b9; border-radius: 4px; background: #fdfdfd; }
    .actions button.primary { border: 1px solid #2f86d0; }
    .actions button:disabled { color: #9b9b9b; border-color: #e4e4e4; background: #f3f4f4; }
  `;

  @state() private choice = "no";

  private tool(t: Tool) {
    if (t === "|") return html`<span class="sep"></span>`;
    if (t === "v" || t === "V") return html`<button class=${classMap({ drop: true, off: t === "v" })} aria-label="▾"></button>`;
    const on = t.startsWith("*");
    const name = on ? t.slice(1) : t;
    return html`<button class=${classMap({ tool: true, on })} aria-label=${name}><oo-icon name=${name}></oo-icon></button>`;
  }

  private cross(color = "#333") {
    return html`<svg viewBox="0 0 12 12"><path d="m1 1 10 10M11 1 1 11" stroke=${color} stroke-width="1.200" fill="none"/></svg>`;
  }

  private palette(cls: string, title: string, tools: Tool[]) {
    return html`<section class="palette ${cls}">
      <header><span>${title}</span>
        <button class="tri" aria-label="▾"><svg viewBox="0 0 12 12"><path d="M0 3h12L6 9z" fill="#111"/></svg></button>
        <button aria-label="×">${this.cross("#111")}</button></header>
      <div class="grid">${tools.map((t) => this.tool(t))}</div>
    </section>`;
  }

  private spinner(label: string, id: string, value: string) {
    return html`<div><label for=${id}>${label}</label>
      <span class="spinbox"><input id=${id} .value=${value} />
        <span class="arrows">
          <button aria-label="+"><svg viewBox="0 0 6 4"><path d="M0 4h6L3 0z"/></svg></button>
          <button aria-label="−"><svg viewBox="0 0 6 4"><path d="M0 0h6L3 4z"/></svg></button>
        </span></span></div>`;
  }

  private renderBars() {
    return html`<div class="bars">
      <div class="row">
        <div class="bar"><span class="grip"></span>${standard.map((t) => this.tool(t))}<button class="over" aria-label="▾"></button></div>
        <div class="bar"><span class="grip"></span>
          <span class="combo w-find"><input placeholder="Найти" aria-label="Найти" /></span>
          ${this.tool("down")}${this.tool("up")}<button class="over" aria-label="▾"></button></div>
      </div>
      <div class="row last">
        <div class="bar"><span class="grip"></span>${this.tool("styles")}
          <span class="combo blue w-style"><select disabled aria-label="Стиль"><option>Базовый</option></select></span>
          <span class="combo blue w-font"><select disabled aria-label="Шрифт"><option>Times New Roman</option></select></span>
          <span class="combo w-size"><select disabled aria-label="Кегль"><option>14</option></select></span>
          ${formatting.map((t) => this.tool(t))}<button class="over" aria-label="▾"></button></div>
      </div>
    </div>`;
  }

  private renderSheet() {
    const knobs = [[0, 0], [50, 0], [100, 0], [0, 50], [100, 50], [0, 100], [50, 100], [100, 100]];
    return html`<article class="sheet"><div class="body">
      <p><span class="wavy">PDF-форма</span></p>
      <p>Введите персональные данные</p>
      <div class="line fio"><label for="fio">ФИО:</label><input class="field" id="fio" /></div>
      <div class="line"><span class="sex">Пол:</span>
        <label class="opt"><input type="checkbox" />М</label><label class="opt"><input type="checkbox" />Ж</label></div>
      <div class="line born"><label for="born">Дата рождения:</label><input class="field" id="born" /></div>
      <div class="hobby"><span>Увлечения:</span>
        <div class="grp"><fieldset><legend>Группа</legend></fieldset>
          ${knobs.map(([x, y]) => html`<i class="knob" style="left:${x}%;top:${y}%"></i>`)}</div></div>
    </div></article>`;
  }

  private renderEditor() {
    return html`<div class="editor">
      <button class="corner" aria-label="L"><i></i></button>
      <div class="hruler"><oo-ruler .length=${795} .zero=${169} .bands=${[
        { from: 0, to: 169, shaded: true }, { from: 169, to: 530, shaded: false }, { from: 530, to: 794, shaded: true }]}></oo-ruler></div>
      <span></span>
      <div class="vruler"><oo-ruler vertical .length=${640} .zero=${268} .bands=${[
        { from: 0, to: 269, shaded: true }, { from: 269, to: 436, shaded: false }, { from: 436, to: 642, shaded: true }]}></oo-ruler></div>
      <div class="canvas">${this.renderSheet()}
        ${this.palette("p1", "Э", controls)}${this.palette("p2", "Д", extras)}</div>
      <div class="vscroll"><div class="thumb"></div>
        <button aria-label="⏫"><svg viewBox="0 0 10 10"><path d="M1 5h8L5 1zM1 9.500h8l-4-4z"/></svg></button>
        <button aria-label="●"><svg viewBox="0 0 10 10"><circle cx="5" cy="5" r="2.500"/></svg></button>
        <button aria-label="⏬"><svg viewBox="0 0 10 10"><path d="M1 .500h8l-4 4zM1 5h8L5 9z"/></svg></button></div>
      <div class="hscroll"><div></div></div>
    </div>`;
  }

  private renderSidebar() {
    return html`<aside class="sidebar">
      <div class="deck">
        <h2>Свойства<button class="closex" aria-label="×">✕</button></h2>
        <h3><svg viewBox="0 0 9 9"><path d="M.500.500h8v8h-8zM2 4.500h5" fill="#fff" stroke="#66788a"/></svg>
          <span>Положение и размер...</span><button aria-label="…">•••</button></h3>
        <div class="dims">${this.spinner("Ширина:", "w", "9,55 см")}${this.spinner("Высота:", "h", "4,39 см")}</div>
        <label class="keep"><input type="checkbox" />Сохранять пропорции</label>
      </div>
      <nav class="tabs">
        <button class="burger" aria-label="≡"><svg viewBox="0 0 24 24"><path d="M4 4h17M4 9h17M4 14h17" stroke="#596a78" stroke-width="2.400"/><path d="M12 17h8l-4 4z" fill="#111"/></svg></button>
        <button class="cur" aria-label="Свойства"><svg viewBox="0 0 24 24"><ellipse cx="13" cy="22" rx="9" ry="2" fill="#ccc"/><path d="m1 5 6-2 5 2v15l-5 2-6-3z" fill="#29a3ee"/><path d="m12 6 5-4 6 3v12l-9 5-3-2V11z" fill="#6cc62e"/><path d="M1 12l6 2 5-2M7 7v15M1 5l6 2 5-2M12 11l5 2 6-3M17 6v14M12 6l5 1 6-2" fill="none" stroke="#fff"/></svg></button>
        <button aria-label="Стили"><svg viewBox="0 0 24 24"><ellipse cx="12" cy="22" rx="9" ry="1.500" fill="#d2d2d2"/><path d="m9 8 10 9-15 4z" fill="#2c7fc9"/><path d="M8 10c1-5 8-6 10 0l2 7c-5-1-9-3-12-7z" fill="#1d2f4a"/><circle cx="3" cy="12" r="2.200" fill="#d86bd0"/><circle cx="13" cy="2.500" r="2" fill="#d86bd0"/><circle cx="21.500" cy="10" r="2" fill="#d86bd0"/><path d="m20 1 1 2 2 .5-1.500 1.500.5 2-2-1-2 1 .5-2L17 3.500l2-.5z" fill="#f3b93c"/><path d="M2 6c1-5 5-4 7-1L7 8z" fill="#c5532a"/><path d="M19 14c4-2 6 3 2 7h-5c3-2 4-3 3-7z" fill="#62a92e"/></svg></button>
        <button aria-label="Галерея"><svg viewBox="0 0 24 24"><ellipse cx="14" cy="21.500" rx="8" ry="1.500" fill="#d2d2d2"/><path d="m1 7 15-5 4 13-15 5z" fill="#fff" stroke="#b9c3ca"/><path d="m3 8 12-4 3 9-12 4z" fill="#8fd04a"/><path d="m8 5 15 5-4 11-13-6z" fill="#f7fafb" stroke="#b9c3ca"/><path d="m9 7.500 11 3.500-3 7-9-4z" fill="#6cc0ea"/><path d="M8 13c3-3 6-1 9 5z" fill="#4b7f31"/><circle cx="14" cy="13" r="2" fill="#8a3b2a"/></svg></button>
        <button aria-label="Навигатор"><svg viewBox="0 0 24 24"><circle cx="12" cy="12" r="10" fill="#f4f6f8" stroke="#ef9f23" stroke-width="2.600"/><path d="M17 6 14 14l-4-3z" fill="#e03a2e"/><path d="m6 19 8-5-4-3z" fill="#2f7bd0"/><path d="M10 6.500v-4l3.500 4v-4" fill="none" stroke="#333"/></svg></button>
      </nav>
    </aside>`;
  }

  private renderStatus() {
    return html`<footer class="status">
      <span class="cell c-page">Страница  1 / 1</span><span class="cell c-style">Обычный</span><span class="cell c-lang"></span>
      <span class="cell c-ins">ВСТ</span><span class="cell c-std">СТАНД</span><span class="cell c-mod">*</span><span class="cell c-sig"></span>
      <span class="cell c-pos"><oo-icon name="pos"></oo-icon><span>0,00 / -2,37</span><oo-icon name="size"></oo-icon>9,55 x 4,39</span>
      <span class="cell c-view"><svg viewBox="0 0 62 14"><g stroke="#7c8f9e" fill="#edf3f7"><path d="M3.500 1.500h6l2 2v8h-8z"/><path d="M17.500 1.500h6l3 3v8h-9zM27.500 1.500h6l3 3v8h-9z" fill="#b5d6f0" stroke="#2f6290"/><path d="M43.500 3.500l2-2h6v10h-8zM51.500 1.500h6l2 2v8h-8z"/></g></svg></span>
      <span class="cell c-zoom"><oo-icon name="minus"></oo-icon><input type="range" min="0" max="100" value="49" aria-label="Масштаб" /><oo-icon name="plus"></oo-icon></span>
      <span class="cell c-pct">100 %</span>
    </footer>`;
  }

  private renderDialog() {
    const pick = (v: string) => () => (this.choice = v);
    return html`<section class="dialog" role="dialog" aria-labelledby="dt">
      <header><span id="dt">Мастер группового блока - Выбор поля по умолчанию</span><button aria-label="×">${this.cross()}</button></header>
      <div class="content">
        <p>Установить какое-либо поле параметров по умолчанию?</p>
        <div class="choice"><input type="radio" name="def" id="yes" .checked=${this.choice === "yes"} @change=${pick("yes")} />
          <label for="yes">Да. <u>С</u>ледующее поле:</label>
          <span class="combo"><select aria-label="Следующее поле" ?disabled=${this.choice === "no"}></select></span></div>
        <div class="choice"><input type="radio" name="def" id="no" .checked=${this.choice === "no"} @change=${pick("no")} />
          <label for="no">Нет. <u>П</u>оле не выбирать.</label></div>
      </div>
      <div class="actions">
        <div><button>&lt;&lt; <u>Н</u>азад</button><button class="primary"><u>Д</u>алее &gt;&gt;</button></div>
        <button disabled><u>Г</u>отово</button><button>Отмена</button>
      </div>
    </section>`;
  }

  render() {
    return html`
      <header class="titlebar"><oo-icon name="app"></oo-icon><h1>Без имени 1 - OpenOffice Writer</h1>
        <div class="win">
          <button aria-label="–"><svg viewBox="0 0 12 12"><path d="M1 6h10" stroke="#8a8a8a"/></svg></button>
          <button aria-label="❐"><svg viewBox="0 0 12 12" fill="none" stroke="#8a8a8a"><rect x="1.500" y="3.500" width="7" height="7" rx="1"/><path d="M4 1.500h5a1.500 1.500 0 0 1 1.500 1.500v5"/></svg></button>
          <button aria-label="×">${this.cross("#8a8a8a")}</button></div></header>
      <nav class="menubar">${menus.map(([a, b, c]) => html`<a href="#">${a}<u>${b}</u>${c}</a>`)}
        <span class="end"><oo-icon name="update"></oo-icon><button class="closex" aria-label="×">✕</button></span></nav>
      ${this.renderBars()}
      <div class="main">${this.renderEditor()}${this.renderSidebar()}</div>
      ${this.renderStatus()}
      ${this.renderDialog()}`;
  }
}
